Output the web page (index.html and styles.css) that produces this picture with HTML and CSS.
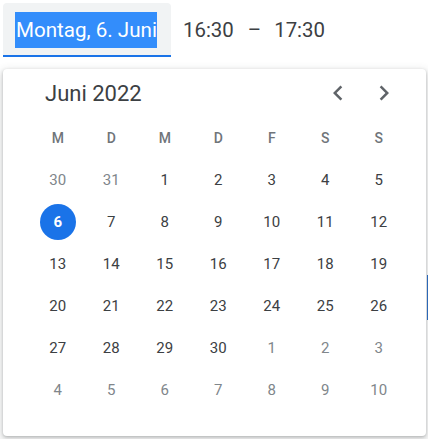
FILE: index.html
```html
<!DOCTYPE html>
<html lang="de">
<head>
<meta charset="utf-8">
<title>Datum</title>
<link rel="stylesheet" href="styles.css">
</head>
<body>
<div class="page">
  <div class="toolbar">
    <div class="date-field"><span class="selected-text">Montag, 6. Juni</span></div>
    <div class="times">
      <span class="time">16:30</span>
      <span class="dash">–</span>
      <span class="time">17:30</span>
    </div>
  </div>
  <div class="edge-bar"></div>
  <div class="popup">
    <div class="popup-header">
      <div class="month">Juni 2022</div>
      <div class="nav">
        <button class="nav-btn" aria-label="Vorheriger Monat">
          <svg width="30" height="30" viewBox="0 0 24 24"><path d="M15.41 7.41 14 6l-6 6 6 6 1.41-1.41L10.83 12z" fill="#5f6368"/></svg>
        </button>
        <button class="nav-btn" aria-label="Nächster Monat">
          <svg width="30" height="30" viewBox="0 0 24 24"><path d="M8.59 16.59 10 18l6-6-6-6-1.41 1.41L13.17 12z" fill="#5f6368"/></svg>
        </button>
      </div>
    </div>
    <div class="grid">
      <div class="wd">M</div><div class="wd">D</div><div class="wd">M</div><div class="wd">D</div><div class="wd">F</div><div class="wd">S</div><div class="wd">S</div>
      <div class="day other">30</div><div class="day other">31</div><div class="day">1</div><div class="day">2</div><div class="day">3</div><div class="day">4</div><div class="day">5</div>
      <div class="day"><span class="sel">6</span></div><div class="day">7</div><div class="day">8</div><div class="day">9</div><div class="day">10</div><div class="day">11</div><div class="day">12</div>
      <div class="day">13</div><div class="day">14</div><div class="day">15</div><div class="day">16</div><div class="day">17</div><div class="day">18</div><div class="day">19</div>
      <div class="day">20</div><div class="day">21</div><div class="day">22</div><div class="day">23</div><div class="day">24</div><div class="day">25</div><div class="day">26</div>
      <div class="day">27</div><div class="day">28</div><div class="day">29</div><div class="day">30</div><div class="day other">1</div><div class="day other">2</div><div class="day other">3</div>
      <div class="day other">4</div><div class="day other">5</div><div class="day other">6</div><div class="day other">7</div><div class="day other">8</div><div class="day other">9</div><div class="day other">10</div>
    </div>
  </div>
</div>
</body>
</html>
```

FILE: styles.css
```css
* { box-sizing: border-box; }
html, body { margin: 0; background: #fff; }
body {
  font-family: Roboto, "Liberation Sans", Arial, sans-serif;
  color: #3c4043;
  width: 428px;
  height: 439px;
  overflow: hidden;
  position: relative;
}
.page { padding: 3px 2px 0 3px; }

.toolbar {
  display: flex;
  align-items: center;
  height: 54px;
}
.date-field {
  height: 54px;
  width: 168px;
  padding: 1px 0 0 12px;
  background: #f1f3f4;
  border-radius: 4px 4px 0 0;
  border-bottom: 2px solid #1a73e8;
  display: flex;
  align-items: center;
}
.selected-text {
  font-size: 20.6px;
  line-height: 36px;
  color: #fff;
  background: #338dfb;
  padding: 0 0 0 1px;
}
.times {
  display: flex;
  align-items: center;
  margin-left: 12px;
  font-size: 20.4px;
  color: #3c4043;
}
.dash { margin: 0 13px 0 14px; }

.edge-bar {
  position: absolute;
  left: 427px;
  top: 275px;
  width: 2px;
  height: 45px;
  background: #2a6fc9;
}

.popup {
  position: relative;
  margin-top: 12px;
  width: 423px;
  height: 367px;
  background: #fff;
  border-radius: 4px;
  box-shadow: 0 1px 3px rgba(60,64,67,.3), 0 4px 8px 3px rgba(60,64,67,.15);
}
.popup-header {
  height: 48px;
  display: flex;
  align-items: center;
  justify-content: space-between;
  padding: 0 22px 0 42px;
}
.month {
  font-size: 22px;
  color: #3c4043;
  padding-top: 1px;
}
.nav { display: flex; gap: 6px; }
.nav-btn {
  width: 40px;
  height: 40px;
  border: 0;
  padding: 0;
  background: transparent;
  display: flex;
  align-items: center;
  justify-content: center;
}

.grid {
  display: grid;
  grid-template-columns: repeat(7, 53.5px);
  grid-auto-rows: 42px;
  margin-left: 28px;
}
.wd, .day {
  display: flex;
  align-items: center;
  justify-content: center;
}
.wd {
  font-size: 14px;
  font-weight: 500;
  color: #70757a;
}
.day {
  font-size: 15px;
  font-weight: 400;
  color: #3c4043;
}
.day.other {
  color: #80868b;
}
.sel {
  width: 36px;
  height: 36px;
  border-radius: 50%;
  background: #1a73e8;
  color: #fff;
  font-weight: 700;
  display: flex;
  align-items: center;
  justify-content: center;
}
```
